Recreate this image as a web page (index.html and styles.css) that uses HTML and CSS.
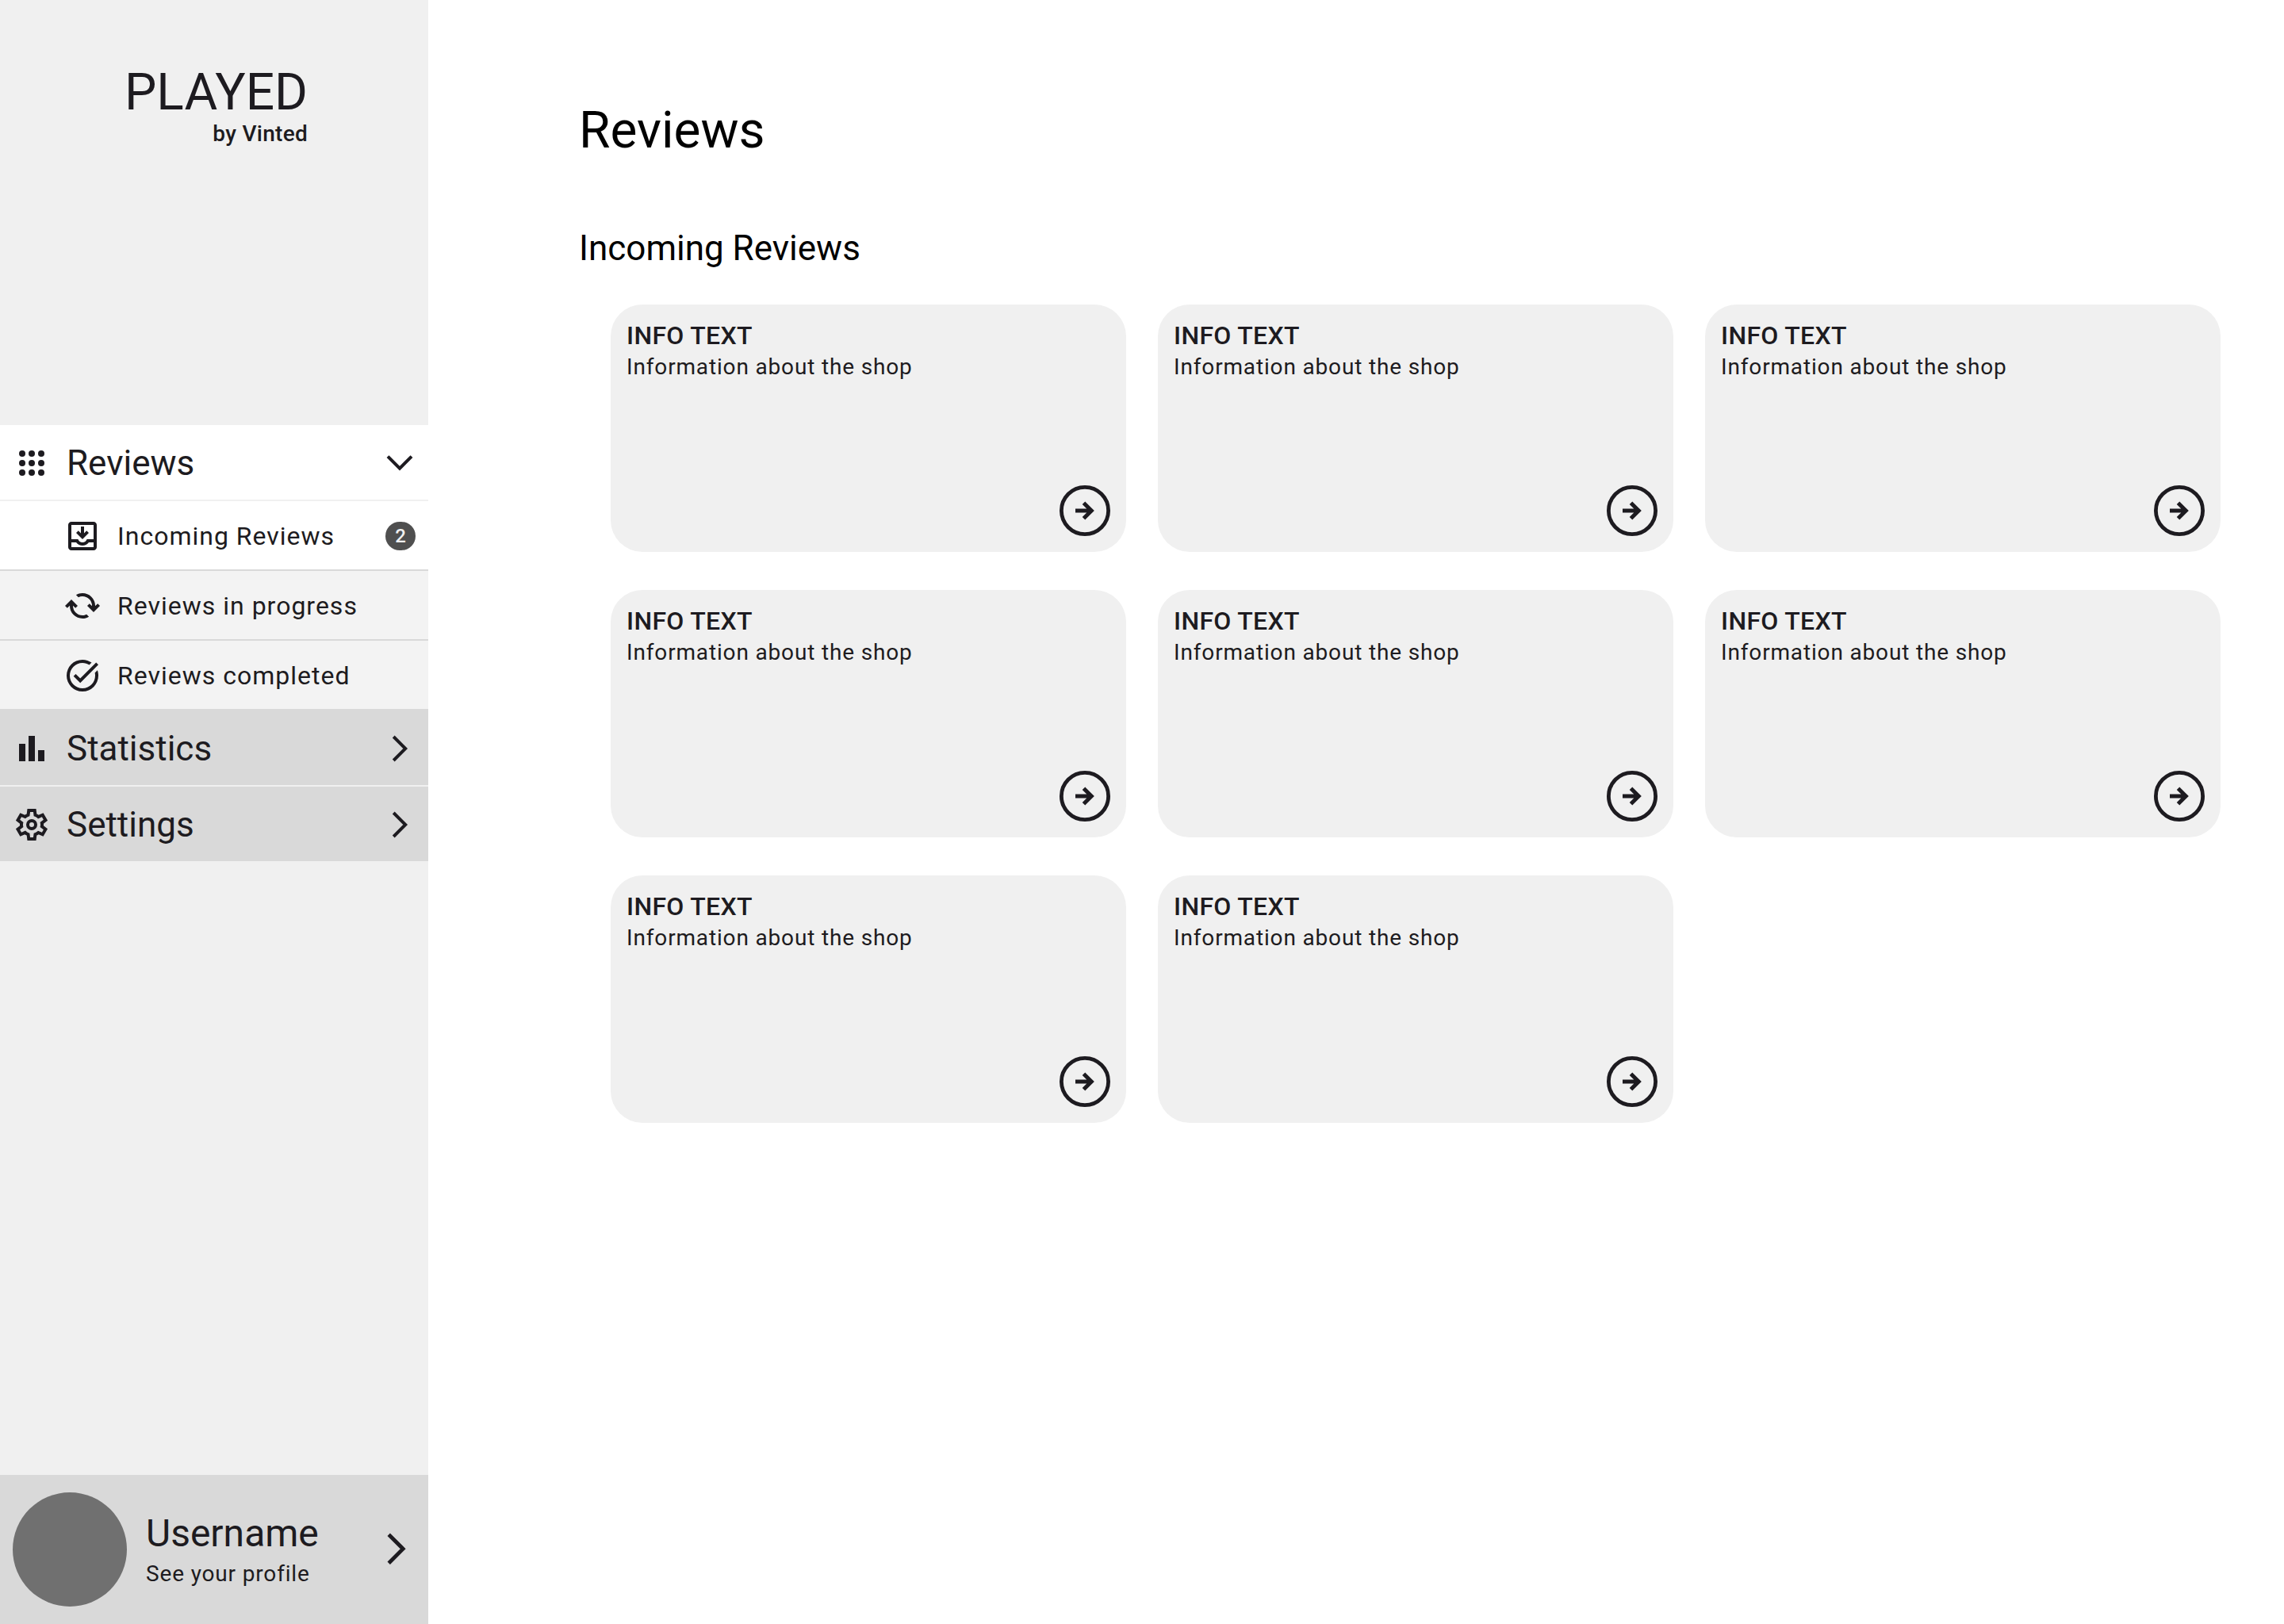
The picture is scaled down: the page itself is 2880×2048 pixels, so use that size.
FILE: index.html
```html
<!DOCTYPE html>
<html lang="en">
<head>
<meta charset="utf-8">
<title>Reviews</title>
<link rel="stylesheet" href="styles.css">
</head>
<body>
<svg class="sprite" aria-hidden="true">
  <symbol id="go" viewBox="0 0 64 64">
    <circle cx="32" cy="32" r="29.6" fill="none" stroke="currentColor" stroke-width="4.8"/>
    <path d="M20 32H40M30.5 22.2L40.3 32L30.5 41.8" fill="none" stroke="currentColor" stroke-width="5"/>
  </symbol>
  <symbol id="chevron" viewBox="0 0 48 48">
    <path d="M16.2 9L31.2 24L16.2 39" fill="none" stroke="currentColor" stroke-width="4"/>
  </symbol>
</svg>
<div class="app">
  <aside class="sidebar">
    <div class="brand">
      <div class="brand-lockup">
        <span class="brand-name">PLAYED</span>
        <span class="brand-by">by Vinted</span>
      </div>
    </div>
    <nav class="menu">
      <button class="item item-open" type="button" aria-expanded="true">
        <svg class="icon" viewBox="0 0 48 48"><circle cx="12" cy="12" r="4"/><circle cx="24" cy="12" r="4"/><circle cx="36" cy="12" r="4"/><circle cx="12" cy="24" r="4"/><circle cx="24" cy="24" r="4"/><circle cx="36" cy="24" r="4"/><circle cx="12" cy="36" r="4"/><circle cx="24" cy="36" r="4"/><circle cx="36" cy="36" r="4"/></svg>
        <span class="label">Reviews</span>
        <svg class="icon" viewBox="0 0 48 48"><path d="M9 15.6L24 30.6L39 15.6" fill="none" stroke="currentColor" stroke-width="4"/></svg>
      </button>
      <a class="subitem subitem-active" href="#incoming">
        <svg class="icon" viewBox="0 -960 960 960"><path d="M200-120q-33 0-56.500-23.500T120-200v-560q0-33 23.500-56.500T200-840h560q33 0 56.500 23.500T840-760v560q0 33-23.500 56.500T760-120H200Zm0-80h560v-120H640q-30 38-71.500 59T480-240q-47 0-88.500-21T320-320H200v120Zm280-120q38 0 69-22t43-58h168v-360H200v360h168q12 36 43 58t69 22Z"/><path d="M480-400 320-560l56-56 64 64v-168h80v168l64-64 56 56-160 160Z"/></svg>
        <span class="label">Incoming Reviews</span>
        <span class="badge">2</span>
      </a>
      <a class="subitem" href="#progress">
        <svg class="icon" viewBox="0 -960 960 960"><path d="M482-160q-134 0-228-93t-94-227v-7l-64 64-56-56 160-160 160 160-56 56-64-64v7q0 100 70.500 170T482-240q26 0 51-6t49-18l60 60q-38 22-78 33t-82 11Zm278-161L600-481l56-56 64 64v-7q0-100-70.500-170T478-720q-26 0-51 6t-49 18l-60-60q38-22 78-33t82-11q134 0 228 93t94 227v7l64-64 56 56-160 160Z"/></svg>
        <span class="label">Reviews in progress</span>
      </a>
      <a class="subitem" href="#completed">
        <svg class="icon" viewBox="0 -960 960 960"><path d="M480-80q-83 0-156-31.500T197-197q-54-54-85.500-127T80-480q0-83 31.500-156T197-763q54-54 127-85.500T480-880q65 0 123 19t107 53l-58 59q-38-24-81-37.500T480-800q-133 0-226.500 93.500T160-480q0 133 93.500 226.500T480-160q133 0 226.500-93.500T800-480q0-18-2-36t-6-35l65-65q11 32 17 66t6 70q0 83-31.500 156T763-197q-54 54-127 85.500T480-80Zm-56-216L254-466l56-56 114 114 400-401 56 56-456 457Z"/></svg>
        <span class="label">Reviews completed</span>
      </a>
      <button class="item" type="button" aria-expanded="false">
        <svg class="icon" viewBox="0 -960 960 960"><path d="M640-160v-280h160v280H640Zm-240 0v-640h160v640H400Zm-240 0v-440h160v440H160Z"/></svg>
        <span class="label">Statistics</span>
        <svg class="icon"><use href="#chevron"/></svg>
      </button>
      <button class="item" type="button" aria-expanded="false">
        <svg class="icon" viewBox="0 -960 960 960"><path fill-rule="evenodd" d="m370-80-16-128q-13-5-24.500-12T307-235l-119 50L78-375l103-78q-1-7-1-13.500v-27q0-6.500 1-13.500L78-585l110-190 119 50q11-8 23-15t24-12l16-128h220l16 128q13 5 24.500 12t22.500 15l119-50 110 190-103 78q1 7 1 13.500v27q0 6.500-2 13.500l103 78-110 190-118-50q-11 8-23 15t-24 12L590-80H370Zm70-80h79l14-106q31-8 57.500-23.500T639-327l99 41 39-68-86-65q5-14 7-29.500t2-31.500q0-16-2-31.500t-7-29.500l86-65-39-68-99 42q-22-23-48.500-38.500T533-694l-13-106h-79l-14 106q-31 8-57.500 23.500T321-633l-99-41-39 68 86 64q-5 15-7 30t-2 32q0 16 2 31t7 30l-86 65 39 68 99-42q22 23 48.500 38.500T427-266l13 106Z"/><circle cx="480" cy="-480" r="100" fill="none" stroke="currentColor" stroke-width="80"/></svg>
        <span class="label">Settings</span>
        <svg class="icon"><use href="#chevron"/></svg>
      </button>
    </nav>
    <a class="profile" href="#profile">
      <span class="avatar"></span>
      <span class="profile-text">
        <span class="profile-name">Username</span>
        <span class="profile-hint">See your profile</span>
      </span>
      <svg class="icon" viewBox="0 0 48 48"><path d="M12.200 5.200L30.200 23.200L12.200 41.200" fill="none" stroke="currentColor" stroke-width="4.800"/></svg>
    </a>
  </aside>
  <main class="main">
    <h1 class="title">Reviews</h1>
    <h2 class="subtitle">Incoming Reviews</h2>
    <div class="cards">
      <article class="card"><h3 class="card-title">INFO TEXT</h3><p class="card-text">Information about the shop</p><button class="go" type="button" aria-label="Open review"><svg class="go-icon"><use href="#go"/></svg></button></article>
      <article class="card"><h3 class="card-title">INFO TEXT</h3><p class="card-text">Information about the shop</p><button class="go" type="button" aria-label="Open review"><svg class="go-icon"><use href="#go"/></svg></button></article>
      <article class="card"><h3 class="card-title">INFO TEXT</h3><p class="card-text">Information about the shop</p><button class="go" type="button" aria-label="Open review"><svg class="go-icon"><use href="#go"/></svg></button></article>
      <article class="card"><h3 class="card-title">INFO TEXT</h3><p class="card-text">Information about the shop</p><button class="go" type="button" aria-label="Open review"><svg class="go-icon"><use href="#go"/></svg></button></article>
      <article class="card"><h3 class="card-title">INFO TEXT</h3><p class="card-text">Information about the shop</p><button class="go" type="button" aria-label="Open review"><svg class="go-icon"><use href="#go"/></svg></button></article>
      <article class="card"><h3 class="card-title">INFO TEXT</h3><p class="card-text">Information about the shop</p><button class="go" type="button" aria-label="Open review"><svg class="go-icon"><use href="#go"/></svg></button></article>
      <article class="card"><h3 class="card-title">INFO TEXT</h3><p class="card-text">Information about the shop</p><button class="go" type="button" aria-label="Open review"><svg class="go-icon"><use href="#go"/></svg></button></article>
      <article class="card"><h3 class="card-title">INFO TEXT</h3><p class="card-text">Information about the shop</p><button class="go" type="button" aria-label="Open review"><svg class="go-icon"><use href="#go"/></svg></button></article>
    </div>
  </main>
</div>
</body>
</html>
```
FILE: styles.css
```css
*, *::before, *::after { box-sizing: border-box; }

body {
  margin: 0;
  background: #fff;
  color: #1d1b20;
  font-family: Roboto, "Liberation Sans", sans-serif;
}

button {
  margin: 0;
  border: 0;
  background: none;
  color: inherit;
  font: inherit;
  text-align: left;
  cursor: pointer;
}

a { color: inherit; text-decoration: none; }

h1, h2, h3, p { margin: 0; font-weight: 400; }

.sprite { display: none; }

.app { display: flex; min-height: 100vh; }

/* Sidebar */
.sidebar {
  display: flex;
  flex-direction: column;
  flex: 0 0 540px;
  background: #f0f0f0;
}

.brand {
  display: flex;
  justify-content: center;
  align-items: flex-start;
  min-height: 536px;
  padding: 81px 0 0 5px;
}

.brand-lockup { display: flex; flex-direction: column; align-items: flex-end; }
.brand-name { font-size: 64px; line-height: 72px; }
.brand-by { font-size: 28px; line-height: 32px; font-weight: 500; letter-spacing: 0.01em; }

.menu { display: flex; flex-direction: column; }

.item, .subitem {
  display: flex;
  align-items: center;
  gap: 20px;
  width: 100%;
}

.item {
  height: 96px;
  padding: 0 12px 0 16px;
  background: #d9d9d9;
  box-shadow: inset 0 -2px #f0f0f0;
  font-size: 44px;
  line-height: 56px;
}

.item-open { background: #fff; }

.subitem {
  height: 88px;
  padding: 0 16px 0 80px;
  background: #f3f3f3;
  box-shadow: inset 0 -2px #d9d9d9;
  font-size: 32px;
  line-height: 48px;
  letter-spacing: 1px;
}

.subitem-active { background: #fff; }

.label { flex: 1; }

.icon { flex: none; width: 48px; height: 48px; fill: currentColor; }

.badge {
  width: 38px;
  border-radius: 18px;
  background: #4f4f4f;
  color: #f0f0f0;
  font-size: 24px;
  font-weight: 500;
  line-height: 36px;
  letter-spacing: 0;
  text-align: center;
}

.profile {
  display: flex;
  align-items: center;
  gap: 24px;
  margin-top: auto;
  padding: 22px 14px 22px 16px;
  background: #d9d9d9;
}

.avatar { flex: none; width: 144px; height: 144px; border-radius: 50%; background: #707070; }
.profile-text { display: flex; flex: 1; flex-direction: column; }
.profile-name { font-size: 48px; line-height: 62px; }
.profile-hint { font-size: 28px; line-height: 40px; letter-spacing: 0.03em; }

/* Content */
.main { flex: 1; padding: 125px 80px 80px 190px; }
.title { color: #000; font-size: 64px; line-height: 80px; }
.subtitle { margin-top: 80px; color: #000; font-size: 44px; line-height: 56px; }

.cards {
  display: grid;
  grid-template-columns: repeat(3, 1fr);
  gap: 48px 40px;
  margin: 43px 0 0 40px;
}

.card {
  display: flex;
  flex-direction: column;
  min-height: 312px;
  padding: 20px;
  border-radius: 40px;
  background: #f0f0f0;
}

.card-title { font-size: 32px; line-height: 39px; font-weight: 500; letter-spacing: 0.01em; }
.card-text { font-size: 28px; line-height: 40px; letter-spacing: 0.03em; }

.go { align-self: flex-end; margin-top: auto; padding: 0; border-radius: 50%; }
.go-icon { display: block; width: 64px; height: 64px; }
```
